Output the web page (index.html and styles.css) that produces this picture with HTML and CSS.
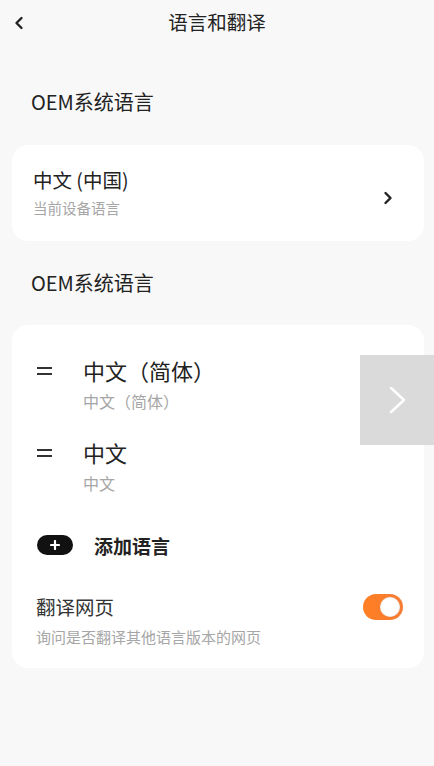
FILE: index.html
```html
<!DOCTYPE html>
<html lang="zh-CN">
<head>
    <meta charset="UTF-8">
    <meta name="viewport" content="width=device-width, initial-scale=1.0">
    <title>语言和翻译</title>
    <link rel="stylesheet" href="styles.css">
</head>
<body>
    <div class="header">
        <svg class="back" width="10" height="14" viewBox="0 0 10 14">
            <path d="M7.5 2 L2.5 7 L7.5 12" fill="none" stroke="#222" stroke-width="2.4" stroke-linecap="round" stroke-linejoin="round"/>
        </svg>
        <h1>语言和翻译</h1>
    </div>

    <div class="section-label first">OEM系统语言</div>
    <div class="card current">
        <div class="current-text">
            <div class="title">中文 (中国)</div>
            <div class="sub">当前设备语言</div>
        </div>
        <svg class="chevron" width="10" height="14" viewBox="0 0 10 14">
            <path d="M2.5 2 L7.5 7 L2.5 12" fill="none" stroke="#222" stroke-width="2.4" stroke-linecap="round" stroke-linejoin="round"/>
        </svg>
    </div>

    <div class="section-label">OEM系统语言</div>
    <div class="card langs">
        <div class="lang-row">
            <span class="drag"></span>
            <div>
                <div class="lang-title">中文（简体）</div>
                <div class="lang-sub">中文（简体）</div>
            </div>
        </div>
        <div class="lang-row second">
            <span class="drag"></span>
            <div>
                <div class="lang-title">中文</div>
                <div class="lang-sub">中文</div>
            </div>
        </div>
        <div class="add-row">
            <span class="add-pill">
                <svg width="10" height="10" viewBox="0 0 10 10">
                    <path d="M5 1 V9 M1 5 H9" stroke="#fff" stroke-width="2.2" stroke-linecap="round"/>
                </svg>
            </span>
            <span class="add-text">添加语言</span>
        </div>
        <div class="translate-row">
            <div>
                <div class="translate-title">翻译网页</div>
                <div class="translate-sub">询问是否翻译其他语言版本的网页</div>
            </div>
            <span class="switch"><span class="knob"></span></span>
        </div>
    </div>

    <div class="side-arrow">
        <svg width="20" height="28" viewBox="0 0 20 28">
            <path d="M3 2 L16 14 L3 26" fill="none" stroke="#fff" stroke-width="2.4" stroke-linecap="round" stroke-linejoin="round"/>
        </svg>
    </div>
</body>
</html>
```

FILE: styles.css
```css
body {
    margin: 0;
    background: #f8f8f8;
    font-family: "Noto Sans CJK SC", "Noto Sans", sans-serif;
    color: #222;
    position: relative;
    min-height: 766px;
}
.header {
    height: 44px;
    display: flex;
    align-items: center;
    justify-content: center;
    position: relative;
}
.back {
    position: absolute;
    left: 14px;
    top: 16px;
}
h1 {
    margin: 0;
    font-size: 19.5px;
    font-weight: 400;
    line-height: 26px;
    color: #222;
}
.section-label {
    font-size: 20px;
    line-height: 24px;
    margin: 30px 0 30px 31px;
    color: #222;
}
.section-label.first {
    margin-top: 46px;
    margin-bottom: 31px;
}
.card {
    background: #fff;
    border-radius: 16px;
    margin: 0 10px 0 12px;
}
.current {
    display: flex;
    align-items: flex-start;
    justify-content: space-between;
    padding: 22px 31px 23px 21px;
}
.title {
    font-size: 19.5px;
    line-height: 26px;
}
.sub {
    margin-top: 5px;
    font-size: 14.5px;
    line-height: 20px;
    color: #a6a6a6;
}
.chevron {
    margin-top: 24px;
}
.langs {
    padding: 31px 24px 21px 24px;
}
.lang-row {
    display: flex;
    align-items: flex-start;
}
.lang-row.second {
    margin-top: 27px;
}
.drag {
    width: 15px;
    height: 8px;
    border-top: 2px solid #333;
    border-bottom: 2px solid #333;
    box-sizing: border-box;
    margin: 11px 31px 0 1px;
}
.lang-title {
    font-size: 22px;
    line-height: 28px;
}
.lang-sub {
    margin-top: 7px;
    font-size: 16px;
    line-height: 20px;
    color: #a6a6a6;
}
.add-row {
    display: flex;
    align-items: center;
    height: 28px;
    margin-top: 38px;
}
.add-pill {
    width: 36px;
    height: 20px;
    border-radius: 10px;
    background: #111;
    display: flex;
    align-items: center;
    justify-content: center;
    margin-left: 1px;
}
.add-text {
    margin-left: 21px;
    font-size: 19px;
    font-weight: 700;
    color: #222;
}
.translate-row {
    display: flex;
    align-items: flex-start;
    justify-content: space-between;
    margin-top: 35px;
}
.translate-title {
    font-size: 19.5px;
    line-height: 26px;
    color: #333;
}
.translate-sub {
    margin-top: 7px;
    font-size: 15px;
    line-height: 20px;
    color: #a6a6a6;
}
.switch {
    width: 40px;
    height: 26px;
    border-radius: 13px;
    background: linear-gradient(90deg, #ff7f22, #f77c35);
    display: flex;
    align-items: center;
    justify-content: flex-end;
    padding-right: 3px;
    box-sizing: border-box;
    margin-right: -3px;
}
.knob {
    width: 20px;
    height: 20px;
    border-radius: 50%;
    background: #fff;
    box-shadow: inset 0 0 2px rgba(0, 0, 0, 0.15);
}
.side-arrow {
    position: absolute;
    left: 360px;
    top: 355px;
    width: 74px;
    height: 90px;
    background: #dadada;
    display: flex;
    align-items: center;
    justify-content: center;
}
.side-arrow svg {
    margin-left: 2px;
}
```
